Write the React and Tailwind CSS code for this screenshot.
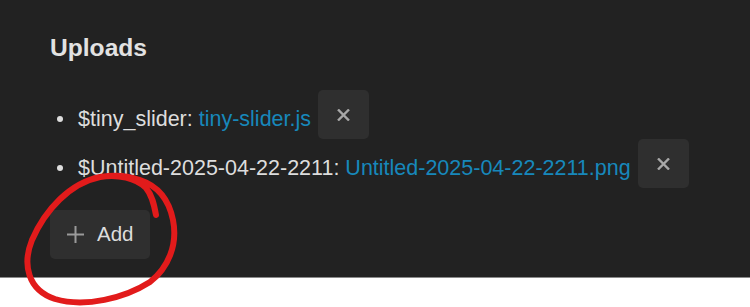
import React from 'react';

const uploads = [
  { name: 'tiny_slider', file: 'tiny-slider.js' },
  { name: 'Untitled-2025-04-22-2211', file: 'Untitled-2025-04-22-2211.png' },
];

const App = () => {
  return (
    <div className="relative min-h-screen bg-white font-['Liberation_Sans',Arial,sans-serif]">
      <div className="h-[278px] bg-[#222222] border-b border-[#8a8a8a] pl-[50px] pt-[36px]">
        <h2 className="text-[24.6px] leading-[24px] font-bold text-[#e2e2e2]">Uploads</h2>

        <ul className="mt-[30px]">
          {uploads.map((u) => (
            <li key={u.name} className="flex items-center h-[49px]">
              <span className="ml-[7px] mt-[9px] w-[6px] h-[6px] rounded-full bg-[#dddddd]" />
              <span className="ml-[15px] pt-[8px] text-[21.5px] leading-[32px] text-[#dddddd] whitespace-nowrap">
                ${u.name}: <a href="#" className="text-[#1788bb]">{u.file}</a>
              </span>
              <button className="ml-[7px] flex items-center justify-center w-[51px] h-[49px] rounded-[5px] bg-[#2f2f2f]">
                <svg width="13" height="12" viewBox="0 0 13 12" fill="none" stroke="#a8a8a8" strokeWidth="2.4">
                  <path d="M1 0.5L12 11.5M12 0.5L1 11.5" />
                </svg>
              </button>
            </li>
          ))}
        </ul>

        <button className="mt-[22px] flex items-center w-[100px] h-[49px] pl-[17px] rounded-[5px] bg-[#2f2f2f]">
          <svg width="17" height="17" viewBox="0 0 17 17" fill="none" stroke="#9a9a9a" strokeWidth="2">
            <path d="M8.5 0V17M0 8.5H17" />
          </svg>
          <span className="ml-[13px] text-[20.5px] leading-[20.5px] text-[#dddddd]">Add</span>
        </button>
      </div>

      {/* hand-drawn annotation */}
      <svg className="absolute left-0 top-0 pointer-events-none" width="750" height="307" fill="none">
        <path
          d="M156 215 C154 204 152 195 146 188 C136 178 118 174 100 177 C70 183 45 210 32 240 C22 265 28 290 55 299 C85 308 125 298 150 282 C168 268 178 245 173 220 C169 200 158 186 140 180 C128 176 118 175 108 176"
          stroke="#e21b1b"
          strokeWidth="6"
          strokeLinecap="round"
          strokeLinejoin="round"
        />
      </svg>
    </div>
  );
};

export default App;
